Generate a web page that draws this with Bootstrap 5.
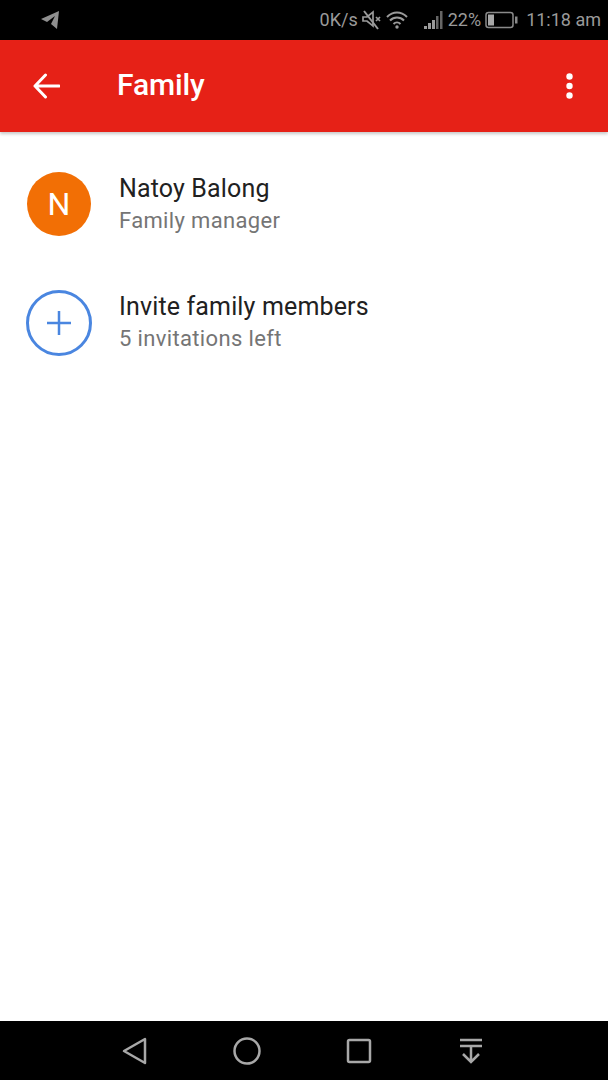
<!DOCTYPE html>
<html lang="en">
<head>
<meta charset="utf-8">
<title>Family</title>
<link href="https://cdn.jsdelivr.net/npm/bootstrap@5.3.0/dist/css/bootstrap.min.css" rel="stylesheet">
<style>
html,body{height:100%;margin:0}
body{font-family:Roboto,"Liberation Sans",sans-serif;background:#fff;width:608px;height:1080px;overflow:hidden}
.phone-shell{height:1080px}
.status-strip{height:40px;background:#000;color:#9a9a9a;font-size:18px;line-height:1;padding:0 7px 0 41px}
.status-strip svg{display:block}
.app-strip{height:92px;background:#e62117;color:#fff;box-shadow:0 2px 3px rgba(0,0,0,.22);position:relative;padding:0 35px 0 33px}
.app-title{font-size:30px;font-weight:500;line-height:1;margin-left:57px;letter-spacing:-.1px;position:relative;top:-1px}
.people{padding-top:40px}
.person-row{height:64px;margin-bottom:54px;padding-left:27px}
.avatar-disc{width:64px;height:64px;border-radius:50%;background:#f26f05;color:#fff;font-size:32px;line-height:64px;text-align:center;flex:none}
.invite-icon{width:66px;height:66px;flex:none;margin-left:-1px;margin-right:-1px}
.person-text{margin-left:28px}
.person-name{font-size:25px;line-height:30px;color:#212121;letter-spacing:.15px;margin-top:2px}
.person-sub{font-size:22px;line-height:28px;color:#757575;letter-spacing:.35px;margin-top:3px}
.softkeys{height:59px;background:#000;padding-left:122px}
.softkeys svg{display:block}
</style>
</head>
<body>
<div class="phone-shell d-flex flex-column">
  <div class="status-strip d-flex align-items-center justify-content-between">
    <svg width="19" height="18" viewBox="0 0 19 18"><path d="M0 8 18 0 16 18 10 13 14 5 6 11Z" fill="#8f8f8f"/></svg>
    <div class="d-flex align-items-center">
      <span>0K/s</span>
      <svg class="ms-1" width="20" height="20" viewBox="0 0 20 20" fill="none" stroke="#9a9a9a" stroke-width="2"><path d="M1 7h4l6-5v14l-6-5H1zM14 7l4 4M18 7l-4 4" stroke-width="1.7"/><path d="M2 1l14 18"/></svg>
      <svg class="ms-1" width="22" height="18" viewBox="0 0 22 18" fill="none" stroke="#9a9a9a" stroke-width="2"><path d="M1 6c6-6 14-6 20 0M4 9.500c4-4 10-4 14 0M7.500 13c2-2 5-2 7 0"/><circle cx="11" cy="16" r="1.700" fill="#9a9a9a" stroke="none"/></svg>
      <svg class="ms-3" width="20" height="20" viewBox="0 0 20 20" fill="#9a9a9a"><rect x="0" y="16" width="3" height="3"/><rect x="4" y="13" width="3" height="6"/><rect x="8" y="10" width="3" height="9"/><rect x="12" y="6" width="2.500" height="13" fill="#666"/><rect x="16" y="1" width="2.500" height="18" fill="#666"/></svg>
      <span class="ms-1">22%</span>
      <svg class="ms-1" width="33" height="18" viewBox="0 0 33 18" fill="none"><rect x="1" y="1.500" width="27" height="15" rx="2.500" stroke="#8a8a8a" stroke-width="1.500"/><rect x="3" y="3.500" width="6" height="11" fill="#a8a8a8"/><rect x="30" y="5.500" width="2.500" height="7" fill="#8a8a8a"/></svg>
      <span class="ms-2">11:18 am</span>
    </div>
  </div>
  <div class="app-strip d-flex align-items-center justify-content-between">
    <div class="d-flex align-items-center">
      <svg width="27" height="26" viewBox="0 0 27 26" fill="none" stroke="#fff" stroke-width="3" stroke-linecap="round" stroke-linejoin="round"><path d="M26 13H2M12.500 2 2 13l10.500 11"/></svg>
      <div class="app-title">Family</div>
    </div>
    <svg width="7" height="26" viewBox="0 0 7 26" fill="#fff"><circle cx="3.500" cy="3.500" r="3.200"/><circle cx="3.500" cy="13" r="3.200"/><circle cx="3.500" cy="22.500" r="3.200"/></svg>
  </div>
  <main class="people flex-grow-1">
    <div class="person-row d-flex align-items-start">
      <div class="avatar-disc">N</div>
      <div class="person-text">
        <div class="person-name">Natoy Balong</div>
        <div class="person-sub">Family manager</div>
      </div>
    </div>
    <div class="person-row d-flex align-items-start">
      <svg class="invite-icon" viewBox="0 0 66 66" fill="none" stroke="#4a86e0"><circle cx="33" cy="33" r="31.500" stroke-width="3"/><path d="M21 33h24M33 21v24" stroke-width="2.500"/></svg>
      <div class="person-text">
        <div class="person-name">Invite family members</div>
        <div class="person-sub">5 invitations left</div>
      </div>
    </div>
  </main>
  <div class="softkeys d-flex align-items-center">
    <svg width="26" height="28" viewBox="0 0 26 28" fill="none" stroke="#a8a8a8" stroke-width="2.500" stroke-linejoin="round"><path d="M23 2v24L2 14Z"/></svg>
    <svg style="margin-left:85px" width="28" height="28" viewBox="0 0 28 28" fill="none" stroke="#a8a8a8" stroke-width="2.500"><circle cx="14" cy="14" r="12.500"/></svg>
    <svg style="margin-left:85px" width="26" height="26" viewBox="0 0 26 26" fill="none" stroke="#a8a8a8" stroke-width="2.500" stroke-linejoin="round"><rect x="2" y="2" width="22" height="22" rx="1.500"/></svg>
    <svg style="margin-left:87px" width="24" height="26" viewBox="0 0 24 26" fill="none" stroke="#a8a8a8" stroke-width="2.500"><path d="M1 2h22M1 8h22M12 8v16M4 16l8 8 8-8"/></svg>
  </div>
</div>
<script src="https://cdn.jsdelivr.net/npm/bootstrap@5.3.0/dist/js/bootstrap.bundle.min.js"></script>
</body>
</html>
